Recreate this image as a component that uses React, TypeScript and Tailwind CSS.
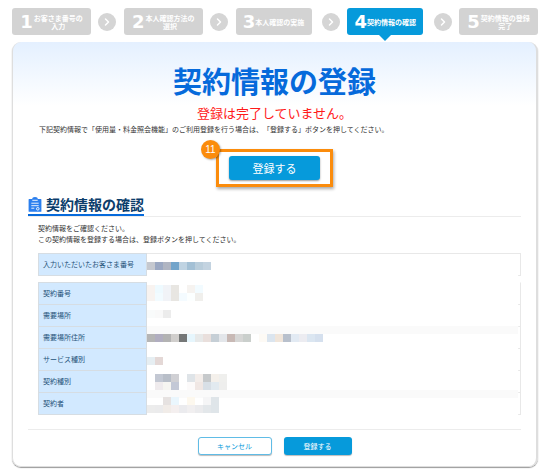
import { Fragment } from "react";
import clsx from "clsx";
import { ChevronRight } from "lucide-react";

const BLOCK = 8;

interface Step {
  lines: string[];
  active?: boolean;
  narrow?: boolean;
}

const STEPS: Step[] = [
  { lines: ["お客さま番号の", "入力"] },
  { lines: ["本人確認方法の", "選択"] },
  { lines: ["本人確認の実施"], narrow: true },
  { lines: ["契約情報の確認"], narrow: true, active: true },
  { lines: ["契約情報の登録", "完了"] },
];

// Each strip is one line of masked blocks; an empty string leaves a gap.
interface Strip {
  y: number;
  colors: string[];
}

interface Row {
  label: string;
  strips: Strip[];
  band?: number;
}

const CUSTOMER_ROW: Row = {
  label: "入力いただいたお客さま番号",
  strips: [
    { y: 8, colors: ["#c5c8cf", "#9ba8c2", "#b0b5c2", "#73a4ca", "#bfd3e2", "#a3c0d5", "#b9cddb", "#c3d3e0"] },
  ],
};

const CONTRACT_ROWS: Row[] = [
  {
    label: "契約番号",
    strips: [
      { y: 2, colors: ["#f8f3f0", "#eefaff", "#f1f3f7", "#e8e6e2", "", "#f6f3f0", "#f2fbff"] },
      { y: 10, colors: ["#f8f3f0", "#f2fbff", "#f1f3f7", "#e8e6e2", "#f4fbff", "#fcffff", "#f0efec"] },
    ],
  },
  {
    label: "需要場所",
    strips: [{ y: 5, colors: ["#f9fbfb", "#f9f9f9", "#ececec"] }],
  },
  {
    label: "需要場所住所",
    band: -1,
    strips: [
      {
        y: 7,
        colors: [
          "#b5b5b5", "#b1aec0", "#b3b3b3", "#d0cecc", "#757777", "#e6f6fd", "#e7e9e9", "#e9dfdc",
          "#c6cfd6", "#e3e6ea", "#c8b9b5", "#d6d6d5", "#cacfcc", "", "#fdfaf5", "#dbe5ef",
          "#f0e5da", "#b8c0cc", "#e2eaf3", "#ececf1", "#dbe6f1", "#d5e0ee",
        ],
      },
    ],
  },
  {
    label: "サービス種別",
    strips: [{ y: 8, colors: ["#e6eef2", "#e4d8d6"] }],
  },
  {
    label: "契約種別",
    strips: [
      { y: 3, colors: ["", "#c3c8d3", "#b8bec8", "#d0d0d4", "", "#dfe4e8", "#f3edea", "#c6c9cb", "#f4f0eb", "#efefed"] },
      { y: 11, colors: ["", "#efebed", "#f6f5f1", "#c3c8d6", "", "#fcfafa", "#f0e7e4", "#d8dfe6", "#e2eaf0", "#eeeeed"] },
    ],
  },
  {
    label: "契約者",
    band: -3,
    strips: [
      { y: 4, colors: ["", "", "#e6e2e1", "#eaf6fd", "", "#fdf8ee", "", "#f5f5f6", "#dfe5e9"] },
      { y: 12, colors: ["#ececec", "#ebebec", "#f1ece8", "#f4efef", "#ebebee", "#f1eff0", "#ebebed", "#e3e7ea", "#dfe5e9"] },
    ],
  },
];

function StepBar() {
  return (
    <ol className="flex items-center justify-between">
      {STEPS.map((step, i) => (
        <Fragment key={step.lines[0]}>
          {i > 0 && (
            <li
              aria-hidden
              className="flex size-[18px] shrink-0 items-center justify-center rounded-full bg-[#d5d5d5] text-white"
            >
              <ChevronRight size={12} strokeWidth={3} />
            </li>
          )}
          <li className="w-[79px] shrink-0">
            <div
              className={clsx(
                "relative flex h-[27px] items-center justify-center rounded-[3px] text-white",
                step.narrow ? "w-[76px]" : "gap-px",
                step.active ? "bg-[#069adb]" : "bg-[#d3d3d3]",
              )}
            >
              <span className="font-['DejaVu_Sans'] text-[18px] leading-[20px] font-bold">{i + 1}</span>
              <span className="text-center text-[7px] leading-[8px] font-bold whitespace-pre">
                {step.lines.join("\n")}
              </span>
              {step.active && (
                <svg
                  className="absolute top-full left-1/2 -translate-x-1/2 fill-[#069adb]"
                  width="12"
                  height="6"
                  viewBox="0 0 12 6"
                >
                  <path d="M0 0h12L6 6z" />
                </svg>
              )}
            </div>
          </li>
        </Fragment>
      ))}
    </ol>
  );
}

function ClipboardIcon() {
  return (
    <svg width="14" height="15" viewBox="0 0 14 15" fill="none">
      <path d="M1.2 2H4.2a2.8 2 0 0 1 5.6 0h3a.6.6 0 0 1 .6.6v11.6a.6.6 0 0 1-.6.6H1.2a.6.6 0 0 1-.6-.6V2.600a.6.6 0 0 1 .6-.6z" fill="#2b7fee" />
      <path d="M4.300 3.300h5.400M3.300 6.200h7.400M3.300 8.700h7.400M3.300 11.200h3" stroke="#fff" strokeWidth=".9" />
      <circle cx="9.800" cy="11.800" r="1.300" fill="#2b7fee" stroke="#fff" strokeWidth=".9" />
    </svg>
  );
}

function MaskedValue({ row }: { row: Row }) {
  return (
    <svg className="block h-[21px] w-full overflow-visible" aria-hidden>
      <rect width="99.5%" height="22" fill="#fff" />
      {row.band !== undefined && <rect y={row.band} width="99.5%" height={BLOCK} fill="#fafafa" />}
      {row.strips.map((strip) =>
        strip.colors.map((color, i) =>
          color ? (
            <rect key={`${strip.y}-${i}`} x={i * BLOCK} y={strip.y} width={BLOCK} height={BLOCK} fill={color} />
          ) : null,
        ),
      )}
    </svg>
  );
}

function InfoTable({ rows, topLine }: { rows: Row[]; topLine?: boolean }) {
  return (
    <table className="w-full table-fixed border-separate border-spacing-0 text-[7px] leading-[11px]">
      <tbody>
        {rows.map((row, i) => (
          <tr key={row.label}>
            <th
              scope="row"
              className={clsx(
                "w-[109px] border-r border-b border-l border-[#d6dde3] bg-[#d2e9ff] py-0 pl-1 text-left font-normal text-[#1f5279]",
                i === 0 && "border-t",
              )}
            >
              {row.label}
            </th>
            <td
              className={clsx(
                "border-r border-b border-[#e8e8e8] p-0",
                i === 0 && (topLine ? "border-t" : "border-t border-t-white"),
              )}
            >
              <MaskedValue row={row} />
            </td>
          </tr>
        ))}
      </tbody>
    </table>
  );
}

export default function App() {
  return (
    <div className="bg-white px-3 pt-2 pb-[9px] font-['Noto_Sans_CJK_JP',sans-serif] text-[#333]">
      <StepBar />

      <main className="mt-[7px] rounded-[9px] border-r-2 border-b border-l border-[#dedede] bg-linear-to-b from-[#e4f0ff] to-white to-[64px] px-[15px] pt-4 pb-[11px] shadow-[0_1px_1px_#999]">
        <h1 className="text-center text-[29px] leading-[44px] font-bold text-[#066adb]">契約情報の登録</h1>
        <p className="text-center text-[13px] leading-[22px] text-[#ff1a1a]">登録は完了していません。</p>
        <p className="px-[11px] text-[7px] leading-[11px] [text-spacing-trim:space-all]">
          下記契約情報で「使用量・料金照会機能」のご利用登録を行う場合は、「登録する」ボタンを押してください。
        </p>

        <div className="relative mx-auto mt-[14px] w-[117px] border-[3px] border-[#fb8c0c] px-[10px] py-1 shadow-[1px_2px_3px_#0005]">
          <button
            type="button"
            className="block h-6 w-full rounded-[3px] bg-[#069adb] text-[11px] leading-[22px] text-white shadow-[0_1px_2px_#0006]"
          >
            登録する
          </button>
          <span className="absolute -top-3 -left-[18px] flex size-[19px] items-center justify-center rounded-full bg-[#fb8c0c] font-['Liberation_Sans'] text-[10px] text-white shadow-[1px_1px_2px_#0005]">
            11
          </span>
        </div>

        <section className="mt-[7px]">
          <div className="border-b border-[#ececec]">
            <h2 className="flex h-[22px] w-fit items-center gap-1 border-b-2 border-[#066adb] text-[14px] leading-[20px] font-bold text-[#0b3d6b]">
              <ClipboardIcon />
              契約情報の確認
            </h2>
          </div>
          <div className="mt-[6px] pl-[10px]">
            <p className="text-[7px] leading-[11px]">
              契約情報をご確認ください。
              <br />
              この契約情報を登録する場合は、登録ボタンを押してください。
            </p>
            <div className="mt-2 flex flex-col gap-[6px]">
              <InfoTable rows={[CUSTOMER_ROW]} topLine />
              <InfoTable rows={CONTRACT_ROWS} />
            </div>
          </div>
        </section>

        <div className="mt-[14px] flex justify-center gap-3 border-t border-[#ececec] pt-[7px] text-[7px]">
          <button
            type="button"
            className="h-[18px] w-[74px] rounded-[3px] border border-[#60bce6] bg-white text-[#069adb] shadow-[0_1px_1px_#0004]"
          >
            キャンセル
          </button>
          <button
            type="button"
            className="h-[18px] w-[68px] rounded-[3px] bg-[#069adb] text-white shadow-[0_1px_1px_#0004]"
          >
            登録する
          </button>
        </div>
      </main>
    </div>
  );
}
